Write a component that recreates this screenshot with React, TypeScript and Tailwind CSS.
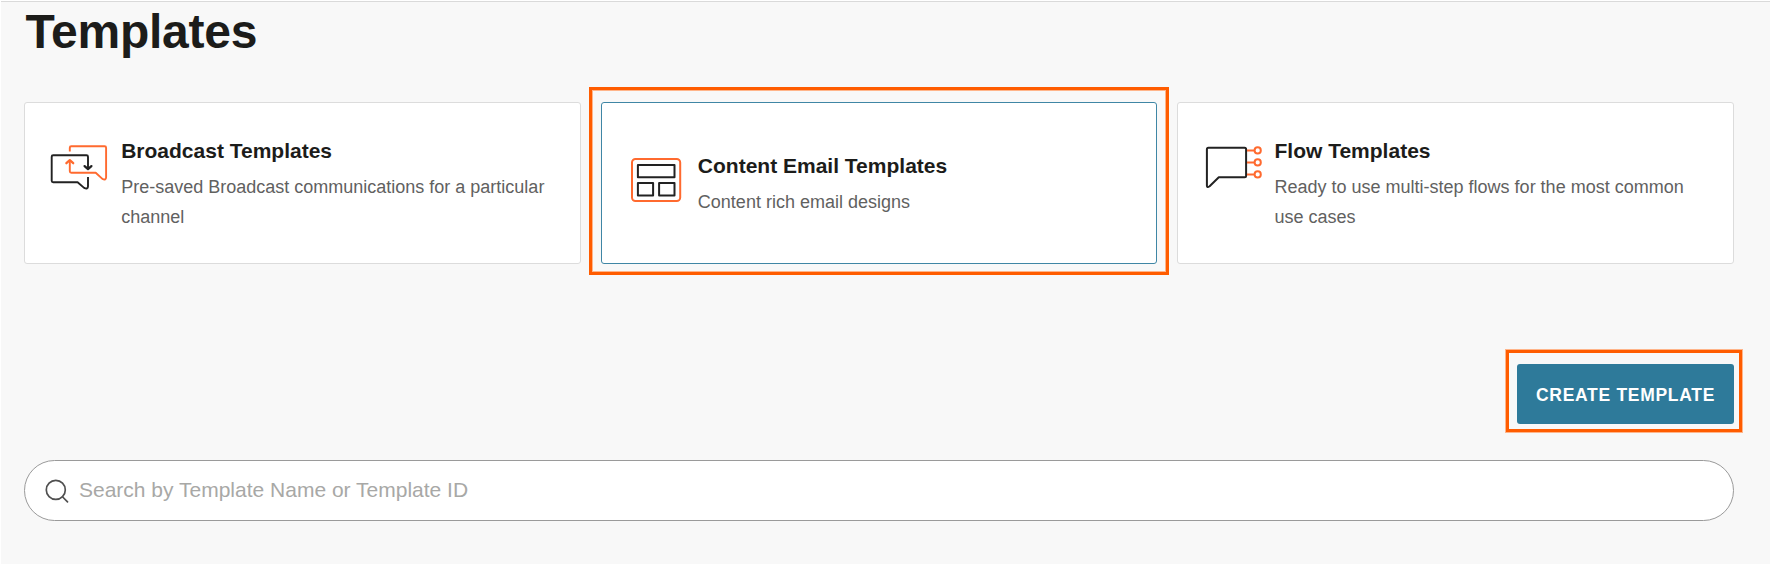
import React from 'react';

interface TemplateType {
  id: string;
  title: string;
  description: string;
  icon: React.ReactNode;
  selected?: boolean;
}

const BroadcastIcon = () => (
  <svg width="60" height="60" viewBox="0 0 60 60" fill="none" strokeWidth="1.9" strokeLinejoin="round">
    <path d="M20.8 16.6V12.8Q20.8 11.3 22.3 11.3H55.6Q57.1 11.3 57.1 12.8V42.3Q57.1 45.6 53.4 43.9L46.7 37.7H22.3Q20.8 37.7 20.8 36.2V26.3" stroke="#ff6a2f" />
    <path d="M17.4 28.2L20.8 25.2L24.2 28.2" stroke="#ff6a2f" strokeWidth="2.3" strokeLinecap="round" />
    <path d="M39 33.3V21.8Q39 20.3 37.5 20.3H4.2Q2.7 20.3 2.7 21.8V45.7Q2.7 47.2 4.2 47.2H28.6L35.1 52.9Q39 54.6 39 51.3V42.1" stroke="#222" />
    <path d="M35.6 31.1L39 34.1L42.4 31.1" stroke="#222" strokeWidth="2.3" strokeLinecap="round" />
  </svg>
);

const ContentEmailIcon = () => (
  <svg width="60" height="60" viewBox="0 0 60 60" fill="none" strokeWidth="2">
    <rect x="6" y="8.9" width="48.2" height="42.2" rx="3.5" stroke="#ff6a2f" />
    <g stroke="#222" strokeLinejoin="round">
      <rect x="11.9" y="14.9" width="36.6" height="12.4" />
      <rect x="11.9" y="33" width="15.2" height="12.4" />
      <rect x="33.1" y="33" width="15.4" height="12.4" />
    </g>
  </svg>
);

const FlowIcon = () => (
  <svg width="60" height="60" viewBox="0 0 60 60" fill="none" strokeWidth="2" strokeLinejoin="round">
    <path d="M6.4 12.7H42.6Q44.1 12.7 44.1 14.2V40.8Q44.1 42.3 42.6 42.3H16.8L7.6 51.2Q4.9 53.3 4.9 50.5V14.2Q4.9 12.7 6.4 12.7Z" stroke="#222" />
    <g stroke="#ff6a2f">
      <path d="M45 15.4H52.5M45 27.4H52.5M45 39.4H52.5" />
      <circle cx="55.7" cy="15.4" r="3.1" />
      <circle cx="55.7" cy="27.4" r="3.1" />
      <circle cx="55.7" cy="39.4" r="3.1" />
    </g>
  </svg>
);

const templateTypes: TemplateType[] = [
  {
    id: 'broadcast',
    title: 'Broadcast Templates',
    description: 'Pre-saved Broadcast communications for a particular channel',
    icon: <BroadcastIcon />,
  },
  {
    id: 'content-email',
    title: 'Content Email Templates',
    description: 'Content rich email designs',
    icon: <ContentEmailIcon />,
    selected: true,
  },
  {
    id: 'flow',
    title: 'Flow Templates',
    description: 'Ready to use multi-step flows for the most common use cases',
    icon: <FlowIcon />,
  },
];

const TemplateCard: React.FC<{ item: TemplateType }> = ({ item }) => (
  <div
    className={`relative flex items-center rounded-[3px] border bg-white pl-6 pr-5 ${
      item.selected ? 'border-[#3f86a5]' : 'border-[#dcdcdc]'
    }`}
  >
    <div className="flex">
      <div className="w-[72.2px] shrink-0 pt-px">{item.icon}</div>
      <div className="pt-0.5">
        <h2 className="text-[21px] leading-[30px] font-bold text-[#1c1c1a]">{item.title}</h2>
        <p className="mt-1.5 text-[18px] leading-[30px] text-[#61615f]">{item.description}</p>
      </div>
    </div>
    {item.selected && (
      <div className="absolute -top-4 -right-[13px] -bottom-3 -left-[13px] border-[3px] border-[#ff5c00] shadow-[inset_0_0_0_1px_#ffb58a]" />
    )}
  </div>
);

export default function App() {
  return (
    <div className="h-[564px] bg-white pt-px pl-px font-['Liberation_Sans',Arial,sans-serif]">
      <div className="h-[563px] border-t border-[#dadada] bg-[#f8f8f8] pl-[23px] pr-9">
        <h1 className="h-[100px] pl-[1.5px] text-[48px] leading-[60px] font-bold tracking-[-0.25px] text-[#1c1c1a]">Templates</h1>

        <div className="grid h-[162px] grid-cols-3 gap-5">
          {templateTypes.map((item) => (
            <TemplateCard key={item.id} item={item} />
          ))}
        </div>

        <div className="mt-[100px] flex justify-end">
          <div className="relative">
            <button className="h-[60px] w-[217px] rounded-[3px] bg-[#2e7a9a] pt-0.5 text-[17.5px] font-bold tracking-[0.7px] text-white">
              CREATE TEMPLATE
            </button>
            <div className="pointer-events-none absolute -top-3.5 -right-2 -bottom-2 -left-[11px] border-[3px] border-[#ff5c00] shadow-[0_0_0_1px_#ffb58a]" />
          </div>
        </div>

        <div className="mt-9 flex h-[61px] items-center rounded-full border border-[#9a9a9a] bg-white pl-5">
          <svg width="24" height="24" viewBox="0 0 24 24" fill="none" stroke="#505050" strokeWidth="1.7" strokeLinecap="round">
            <circle cx="10.8" cy="10.9" r="9.5" />
            <path d="M17.7 18L22.5 22.8" />
          </svg>
          <input
            type="text"
            placeholder="Search by Template Name or Template ID"
            className="ml-2.5 flex-1 bg-transparent pb-0.5 text-[21px] text-gray-800 outline-none placeholder:text-[#a8a8a6]"
          />
        </div>
      </div>
    </div>
  );
}
